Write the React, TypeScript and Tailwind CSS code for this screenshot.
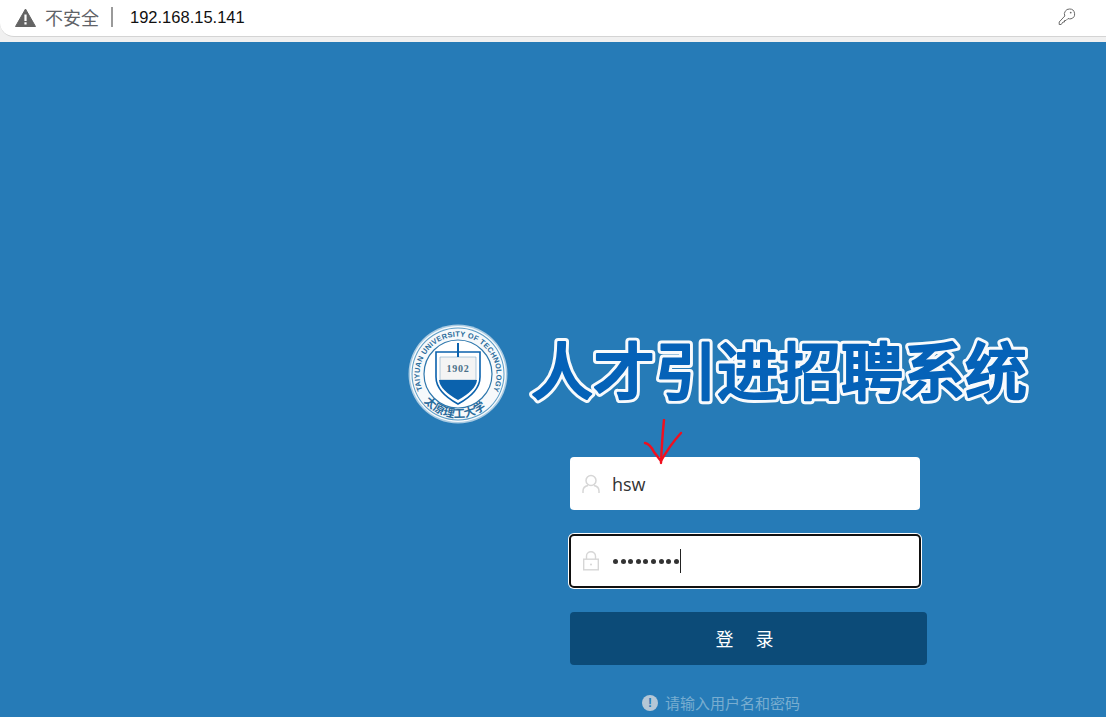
const cjk = "font-['Noto_Sans_CJK_SC','Liberation_Sans',sans-serif]";

/// University seal, drawn because no picture files are available.
function Seal() {
  return (
    <svg width="100" height="100" viewBox="0 0 100 100" className="shrink-0">
      <defs>
        <path id="sealTop" d="M 14.5 66 A 38.5 38.5 0 1 1 85.5 66" />
        <path id="sealBottom" d="M 11 70 A 44 44 0 0 0 89 70" />
      </defs>
      <circle cx="50" cy="50" r="49.5" fill="#a9cbe2" />
      <circle cx="50" cy="50" r="48" fill="#f6f9fb" />
      <circle cx="50" cy="50" r="46.5" fill="#5b9cc6" />
      <circle cx="50" cy="50" r="45.5" fill="#f6f9fb" />
      <circle cx="50" cy="50" r="34" fill="#ffffff" stroke="#2f78ad" strokeWidth="1.2" />
      <text fontFamily="Liberation Sans" fontWeight="700" fontSize="7.4" fill="#2a6c9c" textLength="152" lengthAdjust="spacing">
        <textPath href="#sealTop">TAIYUAN UNIVERSITY OF TECHNOLOGY</textPath>
      </text>
      <text fontFamily="Noto Sans CJK SC" fontWeight="700" fontSize="11.5" fill="#2a6c9c">
        <textPath href="#sealBottom" startOffset="9">太原理工大学</textPath>
      </text>
      <path d="M28 28 H72 V53 Q72 68 50 80 Q28 68 28 53 Z" fill="#ffffff" stroke="#0b62ad" strokeWidth="1.6" />
      <path d="M32 33 H68 V56 H32 Z" fill="#f4f4f4" stroke="#7fa8c6" strokeWidth="0.6" />
      <path d="M31 56 H69 Q68 66 50 76 Q32 66 31 56 Z" fill="#0b62ad" />
      <path d="M49 19 h2 v14 h-2 Z" fill="#0b62ad" />
      <text x="50" y="48" textAnchor="middle" fontFamily="Liberation Serif" fontWeight="700" fontSize="10" letterSpacing="0.8" fill="#4a6f88">
        1902
      </text>
    </svg>
  );
}

/// Outlined logotype: white halo under a slightly fattened blue fill, for the rounded look.
function Title() {
  const common = {
    x: 3,
    y: 71,
    fontFamily: "Noto Sans CJK SC",
    fontWeight: 500,
    fontSize: 62,
    strokeLinejoin: "round" as const,
  };
  return (
    <svg width="505" height="100" viewBox="0 0 505 100" className="ml-[20px] shrink-0">
      <text {...common} fill="#ffffff" stroke="#ffffff" strokeWidth="8" opacity="0.97">
        人才引进招聘系统
      </text>
      <text {...common} fill="#0562b8" stroke="#0562b8" strokeWidth="2.2">
        人才引进招聘系统
      </text>
    </svg>
  );
}

function UserIcon() {
  return (
    <svg width="18" height="20" viewBox="0 0 18 20" fill="none" stroke="#d6d6d6" strokeWidth="1.5">
      <circle cx="9" cy="6.5" r="5" />
      <path d="M1 19 V17 Q1 12.5 6 11.5 M17 19 V17 Q17 12.5 12 11.5" />
    </svg>
  );
}

function LockIcon() {
  return (
    <svg width="16" height="20" viewBox="0 0 16 20" fill="none" stroke="#d6d6d6" strokeWidth="1.4">
      <rect x="0.7" y="8.2" width="14.6" height="10.6" />
      <path d="M3.5 8 V5 a4.5 4.2 0 0 1 9 0 V8" />
      <circle cx="8" cy="13.5" r="1" fill="#d6d6d6" stroke="none" />
    </svg>
  );
}

export default function App() {
  return (
    <div className={`h-[717px] w-[1106px] overflow-hidden bg-[#f0f0f0] ${cjk}`}>
      {/* browser address bar */}
      <div className="flex h-[37px] items-center rounded-bl-[14px] border-b border-[#d4d4d4] bg-white pb-[2px] pl-[15px] pr-[30px]">
        <svg width="21" height="19" viewBox="0 0 21 19">
          <path d="M10.5 1 L20.5 18.5 H0.5 Z" fill="#646464" stroke="#646464" strokeLinejoin="round" />
          <path d="M9.4 6.5 h2.2 v6.5 h-2.2 Z M9.4 14.3 h2.2 v2.2 h-2.2 Z" fill="#ffffff" />
        </svg>
        <span className="ml-[9px] text-[18px] leading-none text-[#5f6368]">不安全</span>
        <span className="ml-[12px] h-[20px] w-[2px] bg-[#9a9a9a]" />
        <span className="ml-[17px] font-['Liberation_Sans',sans-serif] text-[16.5px] text-[#101010]">192.168.15.141</span>
        <svg className="ml-auto" width="18" height="18" viewBox="0 0 18 18" fill="none" stroke="#6b6b6b" strokeWidth="1">
          <path d="M11.5 1 a5 5 0 0 1 1.5 9.8 a5 5 0 0 1 -3 -0.3 L8 12.5 H6.5 V14 H5 L3.2 16.5 H1.2 V14 L6.8 8 a5 5 0 0 1 4.7 -7 Z" />
          <circle cx="12.7" cy="4.6" r="0.9" fill="#6b6b6b" stroke="none" />
        </svg>
      </div>

      {/* page */}
      <div className="mt-[5px] flex h-[675px] flex-col bg-[#267bb7] pl-[408px] pt-[282px]">
        <div className="flex h-[100px] items-center">
          <Seal />
          <Title />
        </div>

        <div className="relative ml-[162px] mt-[33px] flex w-[357px] flex-col">
          {/* red hand-drawn arrow */}
          <svg className="absolute left-[70px] top-[-38px] z-10" width="46" height="46" viewBox="0 0 46 46" fill="none" stroke="#f00f1e" strokeWidth="2.4" strokeLinecap="round">
            <path d="M24 1 Q22 20 21 44" />
            <path d="M5 24 Q10 25 14 33 L21 42 Q30 26 41 14" />
          </svg>

          <div className="flex h-[53px] w-[350px] items-center rounded-[4px] bg-white pl-[12px]">
            <UserIcon />
            <span className="ml-[12px] mt-[2px] font-['Open_Sans',sans-serif] text-[18px] text-[#333333]">hsw</span>
          </div>

          <div className="ml-[1px] mt-[26px] flex h-[50px] w-[348px] items-center rounded-[3px] bg-white pl-[12px] outline-2 outline-[#111111] shadow-[0_0_0_3px_#ffffff]">
            <LockIcon />
            <span className="ml-[14px] flex items-center gap-[2.6px]">
              {Array.from({ length: 9 }).map((_, i) => (
                <span key={i} className="h-[5px] w-[5px] rounded-full bg-[#333333]" />
              ))}
            </span>
            <span className="ml-[1px] h-[24px] w-px bg-[#222222]" />
          </div>

          <button className="mt-[26px] flex h-[53px] w-[357px] items-center justify-center rounded-[4px] bg-[#0c4b78] pr-[8px] text-[18px] text-white">
            登<span className="w-[22px]" />录
          </button>

          <div className="ml-[72px] mt-[28px] flex items-center text-[15px] leading-[20px] text-[#78add0]">
            <span className="flex h-[16px] w-[16px] items-center justify-center rounded-full bg-[#b5c7d6] font-['Liberation_Sans',sans-serif] text-[12px] font-bold text-[#267bb7]">
              !
            </span>
            <span className="ml-[7px]">请输入用户名和密码</span>
          </div>
        </div>
      </div>
    </div>
  );
}
